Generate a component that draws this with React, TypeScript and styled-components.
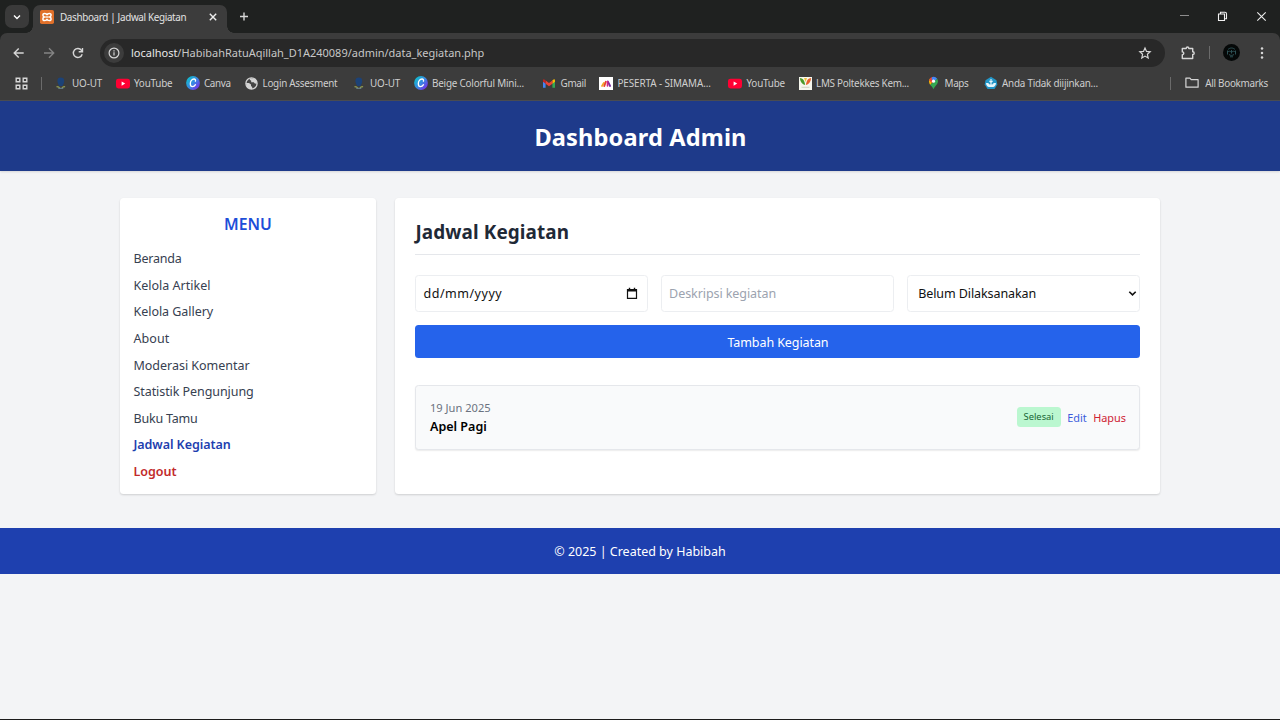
import React from "react";
import styled, { createGlobalStyle, css } from "styled-components";

const Global = createGlobalStyle`
  * { box-sizing: border-box; }
  html, body { margin: 0; padding: 0; background: #f3f4f6; }
  body { font-family: "Noto Sans", "Open Sans", sans-serif; overflow: hidden; }
  h1, h2, h3, p, ul { margin: 0; padding: 0; }
`;

const Screen = styled.div`
  width: 1280px;
  height: 720px;
  display: flex;
  flex-direction: column;
  background: #f3f4f6;
  border-bottom: 1px solid #1b1b1b;
`;

/* Browser frame */

const TabStrip = styled.div`
  height: 33px;
  flex: none;
  display: flex;
  align-items: flex-start;
  padding: 5px 0 0 5px;
  background: #1f2120;
  color: #e3e3e3;
`;

const TabSearch = styled.div`
  width: 24px;
  height: 23px;
  border-radius: 7px;
  background: #3a3a3a;
  display: flex;
  align-items: center;
  justify-content: center;
`;

const Tab = styled.div`
  position: relative;
  height: 28px;
  width: 194px;
  margin-left: 4px;
  padding: 0 9px 5px 7px;
  display: flex;
  align-items: center;
  border-radius: 7px 7px 0 0;
  background: #3c3c3c;

  &::before, &::after {
    content: "";
    position: absolute;
    bottom: 0;
    width: 7px;
    height: 7px;
  }
  &::before {
    left: -7px;
    background: radial-gradient(circle at 0 0, transparent 6.5px, #3c3c3c 7px);
  }
  &::after {
    right: -7px;
    background: radial-gradient(circle at 100% 0, transparent 6.5px, #3c3c3c 7px);
  }
`;

const TabTitle = styled.span`
  flex: 1;
  margin-left: 6px;
  font-size: 9.9px;
  letter-spacing: -0.34px;
  line-height: 14px;
  white-space: nowrap;
`;

const NewTab = styled.div`
  margin: 5px 0 0 11px;
  height: 14px;
  display: flex;
`;

const WindowControls = styled.div`
  margin: 3px 0 0 auto;
  padding-right: 13.5px;
  height: 16px;
  display: flex;
  align-items: center;
  gap: 27.5px;
`;

const ToolbarBack = styled.div`
  background: #1f2120;
  flex: none;
`;

const Toolbar = styled.div`
  height: 39px;
  display: flex;
  align-items: center;
  padding: 0 16px 0 12px;
  background: #3c3c3c;
  border-radius: 7px 7px 0 0;
`;

const NavButtons = styled.div`
  display: flex;
  gap: 15.7px;
  width: 88px;
`;

const AddressBar = styled.div`
  width: 1065px;
  height: 28px;
  border-radius: 14px;
  background: #282828;
  display: flex;
  align-items: center;
  padding: 0 13px 0 4px;
`;

const SiteInfo = styled.div`
  width: 20px;
  height: 20px;
  border-radius: 50%;
  background: #3c3c3c;
  display: flex;
  align-items: center;
  justify-content: center;
`;

const Url = styled.span`
  flex: 1;
  margin-left: 7px;
  font-size: 10.97px;
  line-height: 16px;
  color: #c7c7c7;
  white-space: nowrap;

  b { font-weight: 400; color: #e8e8e8; }
`;

const ToolbarEnd = styled.div`
  margin-left: auto;
  display: flex;
  align-items: center;
`;

const Divider = styled.span<{ $left?: number }>`
  flex: none;
  width: 1px;
  height: 13px;
  margin-left: ${(p) => p.$left ?? 0}px;
  background: #6b6b6b;
`;

const Avatar = styled.div`
  width: 17px;
  height: 17px;
  margin: 0 20px 0 13px;
  border-radius: 50%;
  background: #050808;
  display: flex;
  align-items: center;
  justify-content: center;
`;

const BookmarksBar = styled.div`
  height: 29px;
  flex: none;
  display: flex;
  align-items: center;
  padding: 0 12px 6px 15px;
  background: #3c3c3c;
  border-bottom: 1px solid #4a4c52;
`;

const BookmarkList = styled.div`
  display: flex;
  margin-left: 13px;
  flex: 1;
`;

const Bookmark = styled.div<{ $w: number }>`
  width: ${(p) => p.$w}px;
  display: flex;
  align-items: center;
  gap: 4.5px;
`;

const BookmarkLabel = styled.span<{ $ls: number }>`
  font-size: 9.9px;
  line-height: 14px;
  letter-spacing: ${(p) => p.$ls}px;
  color: #cfcfcf;
  white-space: nowrap;
`;

const AllBookmarks = styled.div`
  display: flex;
  align-items: center;
  gap: 6px;
  margin-left: 14px;
`;

/* Page */

const PageHeader = styled.header`
  height: 70px;
  flex: none;
  display: flex;
  align-items: center;
  justify-content: center;
  background: #1e3a8a;
  color: #fff;
  box-shadow: 0 1px 2px rgba(0, 0, 0, 0.12);

  h1 {
    padding: 2px 0 0 1px;
    font-size: 23.6px;
    line-height: 30px;
    letter-spacing: 0.14px;
    font-weight: 700;
  }
`;

const Main = styled.main`
  width: 1040px;
  height: 296.5px;
  flex: none;
  margin: 26.5px auto 33.5px;
  display: grid;
  grid-template-columns: 256px 765px;
  grid-template-rows: 296.5px;
  justify-content: space-between;
`;

const cardShadow = css`
  box-shadow: 0 1px 2px rgba(0, 0, 0, 0.12), 0 1px 3px rgba(0, 0, 0, 0.04);
`;

const Sidebar = styled.aside`
  padding: 13px 13.5px 0;
  border-radius: 3.5px;
  background: #fff;
  ${cardShadow}

  h3 {
    font-size: 15.8px;
    line-height: 26px;
    font-weight: 600;
    text-align: center;
    color: #1d4ed8;
  }
  ul {
    margin-top: 11.4px;
    list-style: none;
  }
`;

const MenuItem = styled.li<{ $tone?: "active" | "danger"; $ls: number }>`
  height: 26.67px;
  font-size: 12.53px;
  line-height: 21px;
  letter-spacing: ${(p) => p.$ls}px;
  font-weight: ${(p) => (p.$tone ? 600 : 400)};
  color: ${(p) => (p.$tone === "active" ? "#1e40af" : p.$tone === "danger" ? "#c22a2a" : "#374151")};
`;

const Content = styled.section`
  padding: 20px 20px 0;
  border-radius: 3.5px;
  background: #fff;
  ${cardShadow}

  h2 {
    height: 37.5px;
    padding: 1px 0 0 0.5px;
    border-bottom: 1px solid #e5e7eb;
    font-size: 18.9px;
    line-height: 27px;
    letter-spacing: 0.1px;
    font-weight: 700;
    color: #1f2937;
  }
`;

const Form = styled.div`
  display: grid;
  grid-template-columns: repeat(3, 1fr);
  gap: 13.3px;
  margin-top: 20px;
`;

const Field = styled.div<{ $pad: string; $ls: number; $muted?: boolean }>`
  height: 36.7px;
  padding: ${(p) => p.$pad};
  display: flex;
  align-items: center;
  justify-content: space-between;
  border: 1px solid #eceef1;
  border-radius: 3.5px;
  background: #fff;
  font-size: 12.53px;
  line-height: 20px;
  letter-spacing: ${(p) => p.$ls}px;
  color: ${(p) => (p.$muted ? "#9ca3af" : "#111")};
`;

const FieldIcon = styled.span`
  display: flex;
  padding-bottom: 2px;
`;

const SubmitButton = styled.button`
  grid-column: 1 / -1;
  height: 33.3px;
  padding: 1px 0 0 1px;
  border: 0;
  border-radius: 3.5px;
  background: #2563eb;
  color: #fff;
  font-family: inherit;
  font-size: 12.53px;
  letter-spacing: -0.09px;
`;

const Activity = styled.article`
  height: 64.5px;
  margin-top: 27px;
  padding: 0 13px 0 14px;
  display: flex;
  align-items: center;
  justify-content: space-between;
  border: 1px solid #e5e7eb;
  border-radius: 3.5px;
  background: #f9fafb;
  box-shadow: 0 1px 1.5px rgba(0, 0, 0, 0.08);
`;

const ActivityDate = styled.p`
  font-size: 11.1px;
  line-height: 17px;
  color: #6b7280;
`;

const ActivityName = styled.p`
  padding-top: 1px;
  font-size: 12.53px;
  line-height: 20px;
  font-weight: 600;
  color: #000;
`;

const Actions = styled.div`
  display: flex;
  align-items: center;
  gap: 6.5px;
`;

const Badge = styled.span`
  width: 44px;
  height: 20px;
  margin-bottom: 1px;
  border-radius: 3.5px;
  background: #bbf7d0;
  color: #166534;
  font-size: 9.35px;
  line-height: 20px;
  text-align: center;
`;

const ActionLink = styled.span<{ $color: string }>`
  padding-top: 1px;
  font-size: 10.9px;
  line-height: 16px;
  color: ${(p) => p.$color};
`;

const Footer = styled.footer`
  height: 46.5px;
  flex: none;
  display: flex;
  align-items: center;
  justify-content: center;
  padding-top: 1px;
  background: #1e40af;
  color: #fff;
  font-size: 12.5px;
  letter-spacing: -0.01px;
`;

/* Icons */

const stroke = { fill: "none", stroke: "#d6d6d6", strokeWidth: 1.4 } as const;

const Favicon = () => (
  <svg width="14" height="14" viewBox="0 0 14 14">
    <rect width="14" height="14" rx="1.8" fill="#e0702a" />
    <path
      d="M7 5.200C6.700 3.800 5.900 3.400 4.700 3.400 3.300 3.400 2.900 4.200 2.900 5.100c0 1 .6 1.500 1.300 1.900-.7.4-1.300.9-1.300 1.900 0 .9.4 1.700 1.800 1.700 1.200 0 2-.4 2.300-1.800.3 1.400 1.100 1.800 2.300 1.800 1.400 0 1.800-.8 1.800-1.700 0-1-.6-1.500-1.300-1.900.7-.4 1.300-.9 1.300-1.900 0-.9-.4-1.700-1.800-1.700-1.200 0-2 .4-2.300 1.800z"
      fill="none"
      stroke="#fff"
      strokeWidth="1.500"
    />
    <path d="M5.300 7h3.400" stroke="#fff" strokeWidth="1.300" />
  </svg>
);

const Crest = () => (
  <svg width="13" height="13" viewBox="0 0 13 13">
    <circle cx="5.800" cy="4" r="3.400" fill="#1c4277" />
    <path d="M2.800 6h6L7.500 9H4.100z" fill="#1c4277" />
    <path d="M1.500 9.600c1.300 0 2.300.4 3.200 1.100M10.100 9.600c-1.300 0-2.300.4-3.200 1.100" stroke="#8f9c52" strokeWidth="1.100" fill="none" />
    <path d="M3.300 11.300h5" stroke="#6d8a94" fill="none" />
  </svg>
);

const YouTube = () => (
  <svg width="14" height="13" viewBox="0 0 14 13">
    <rect y="1.700" width="14" height="9.800" rx="2.400" fill="#ff0033" />
    <path d="M5.600 4.500v4.200l3.600-2.100z" fill="#fff" />
  </svg>
);

const Canva = ({ id }: { id: string }) => (
  <svg width="14" height="14" viewBox="0 0 14 14">
    <defs>
      <linearGradient id={id} x1="0.100" y1="0.200" x2="0.900" y2="0.900">
        <stop offset="0" stopColor="#13b9cf" />
        <stop offset="0.500" stopColor="#3a86e4" />
        <stop offset="1" stopColor="#7a2be8" />
      </linearGradient>
    </defs>
    <circle cx="7" cy="7" r="6.900" fill={`url(#${id})`} />
    <path d="M9.400 5.200c.4-1.200-.2-2.200-1.400-2.200C5.900 3 4.300 5.300 4.300 7.800c0 1.800.8 2.900 2.200 2.900 1.300 0 2.300-.8 3-2" fill="none" stroke="#fff" strokeWidth="1.300" strokeLinecap="round" />
  </svg>
);

const Globe = () => (
  <svg width="13" height="13" viewBox="0 0 13 13">
    <circle cx="6.500" cy="6.500" r="5.600" fill="#444" stroke="#d4d4d4" strokeWidth="1.300" />
    <path d="M1 6h3l2 1.600v1.300l1.200 1v2L5 12 2 10zM5 1.200l-.3 1.600 1.500 1v1.400h2.600l1 1.400 2 .2V4L9 1.500z" fill="#d4d4d4" />
  </svg>
);

const Gmail = () => (
  <svg width="14" height="13" viewBox="0 0 14 13">
    <path d="M1 3.500v7.300h2.600V5.500z" fill="#4285f4" />
    <path d="M13 3.500v7.300h-2.600V5.500z" fill="#34a853" />
    <path d="M10.400 3.300L12 2.200c.5 0 1 .5 1 1.200v1.400l-2.600 2z" fill="#fbbc04" />
    <path d="M3.600 3.500L7 6.100l3.400-2.600v3.200L7 9.200 3.600 6.700z" fill="#ea4335" />
    <path d="M1 3.400c0-.7.500-1.200 1-1.200l1.600 1.300v3.200L1 4.800z" fill="#c5221f" />
  </svg>
);

const Simama = () => (
  <svg width="14" height="13" viewBox="0 0 14 13">
    <rect width="14" height="13" fill="#fff" />
    <path d="M3 9L4.800 5.800" stroke="#f5a623" strokeWidth="1.700" strokeLinecap="round" />
    <path d="M5.300 9l1.500-4.200" stroke="#e8432e" strokeWidth="1.900" strokeLinecap="round" />
    <path d="M8.800 4.500l2.300 4.500" stroke="#7b2fa0" strokeWidth="1.900" strokeLinecap="round" />
    <path d="M8.500 4.500V9" stroke="#d2258b" strokeWidth="1.600" strokeLinecap="round" />
  </svg>
);

const Lms = () => (
  <svg width="13" height="13" viewBox="0 0 13 13">
    <rect width="13" height="13" fill="#f6f7ee" />
    <path d="M.8 1c3 .3 4.700 2.300 5.300 6.900C3.200 7.500 1.300 5 .8 1z" fill="#4c9a2a" />
    <path d="M12.200 1c-3 .3-4.700 2.300-5.300 6.900C9.800 7.500 11.700 5 12.200 1z" fill="#e8622c" />
    <path d="M5 1h3L6.500 5z" fill="#f0c23b" />
    <path d="M2.500 10.300h8" stroke="#c3cbb8" strokeWidth=".8" />
  </svg>
);

const Maps = () => (
  <svg width="13" height="14" viewBox="0 0 13 14">
    <path d="M2 5.300A4.500 4.500 0 0 1 3 2.400L6.500 5.300 3.200 9C2.500 7.800 2 6.600 2 5.300z" fill="#fbbc04" />
    <path d="M3 2.400A4.500 4.500 0 0 1 5.200 1L8 3.400 4.800 7 2.100 4.200z" fill="#ea4335" />
    <path d="M5.200 1A4.600 4.600 0 0 1 10.200 2.700L7.500 6 4.500 3z" fill="#4285f4" />
    <path d="M10.200 2.700c.5.800.8 1.700.8 2.600 0 3-3 4.500-4.500 8-.6-1.600-1.700-2.800-3.300-4.300z" fill="#34a853" />
    <circle cx="6.500" cy="5.200" r="1.600" fill="#fff" />
  </svg>
);

const Kemdik = () => (
  <svg width="14" height="14" viewBox="0 0 14 14">
    <path d="M7 .7l5.500 3.600.8 4.200L10.500 13h-7L.7 8.500l.8-4.200z" fill="#2296c8" />
    <path d="M2 7.200c1.600-.3 2.800.2 3.600 1.300h2.800c.8-1.100 2-1.600 3.600-1.300-.2 2.100-1.400 3.600-3 3.900H5C3.400 10.800 2.200 9.300 2 7.200z" fill="#e6f6fc" />
    <path d="M7 3v6M5.400 4.800L7 6.400l1.600-1.600" fill="none" stroke="#e6f6fc" strokeWidth="1.100" />
  </svg>
);

const bookmarks: { label: string; w: number; ls: number; icon: React.ReactNode }[] = [
  { label: "UO-UT", w: 61, ls: -0.15, icon: <Crest /> },
  { label: "YouTube", w: 70, ls: -0.22, icon: <YouTube /> },
  { label: "Canva", w: 59.5, ls: -0.38, icon: <Canva id="canvaA" /> },
  { label: "Login Assesment", w: 107.5, ls: -0.28, icon: <Globe /> },
  { label: "UO-UT", w: 61, ls: -0.15, icon: <Crest /> },
  { label: "Beige Colorful Mini...", w: 128.5, ls: -0.2, icon: <Canva id="canvaB" /> },
  { label: "Gmail", w: 57, ls: -0.3, icon: <Gmail /> },
  { label: "PESERTA - SIMAMA...", w: 129, ls: -0.1, icon: <Simama /> },
  { label: "YouTube", w: 70.5, ls: -0.22, icon: <YouTube /> },
  { label: "LMS Poltekkes Kem...", w: 128.500, ls: -0.26, icon: <Lms /> },
  { label: "Maps", w: 56.5, ls: -0.33, icon: <Maps /> },
  { label: "Anda Tidak diijinkan...", w: 120, ls: -0.24, icon: <Kemdik /> },
];

const menu: { label: string; ls: number; tone?: "active" | "danger" }[] = [
  { label: "Beranda", ls: -0.2 },
  { label: "Kelola Artikel", ls: 0 },
  { label: "Kelola Gallery", ls: -0.05 },
  { label: "About", ls: 0.08 },
  { label: "Moderasi Komentar", ls: -0.03 },
  { label: "Statistik Pengunjung", ls: -0.08 },
  { label: "Buku Tamu", ls: -0.2 },
  { label: "Jadwal Kegiatan", ls: -0.06, tone: "active" },
  { label: "Logout", ls: -0.02, tone: "danger" },
];

export default function App() {
  return (
    <Screen>
      <Global />
      <TabStrip>
        <TabSearch>
          <svg width="10" height="10" viewBox="0 0 10 10"><path d="M2 3.500l3 3 3-3" {...stroke} stroke="#fff" /></svg>
        </TabSearch>
        <Tab>
          <Favicon />
          <TabTitle>Dashboard | Jadwal Kegiatan</TabTitle>
          <svg width="10" height="10" viewBox="0 0 10 10"><path d="M1.800 1.800l6.400 6.400M8.200 1.800L1.800 8.200" {...stroke} stroke="#eee" /></svg>
        </Tab>
        <NewTab>
          <svg width="12" height="14" viewBox="0 0 12 14"><path d="M6 2.500v8M2 6.500h8" {...stroke} /></svg>
        </NewTab>
        <WindowControls>
          <svg width="11" height="14" viewBox="0 0 11 14"><path d="M1 6.500h9" stroke="#8d8d8d" /></svg>
          <svg width="11" height="11" viewBox="0 0 11 11"><path d="M1.500 3h6v6.500h-6zM3.500 2.500V1.200H8A1.500 1.500 0 0 1 9.500 2.700v5H8" {...stroke} stroke="#f2f2f2" strokeWidth={1.1} /></svg>
          <svg width="11" height="11" viewBox="0 0 11 11"><path d="M1.300 1.300l8.400 8.400M9.700 1.300L1.300 9.700" {...stroke} stroke="#eee" strokeWidth={1.1} /></svg>
        </WindowControls>
      </TabStrip>
      <ToolbarBack>
        <Toolbar>
          <NavButtons>
            <svg width="14" height="14" viewBox="0 0 14 14"><path d="M11.700 7H2.500M6.700 2.500L2.200 7l4.500 4.500" {...stroke} /></svg>
            <svg width="14" height="14" viewBox="0 0 14 14"><path d="M2 7h9.500M7 2.300L11.700 7 7 11.700" {...stroke} stroke="#848484" /></svg>
            <svg width="14" height="14" viewBox="0 0 14 14"><path d="M11.200 8.300A4.500 4.500 0 1 1 10.500 4.300L11.500 5.500M11.500 1.900v3.800H7.700" {...stroke} /></svg>
          </NavButtons>
          <AddressBar>
            <SiteInfo>
              <svg width="12" height="12" viewBox="0 0 12 12">
                <circle cx="6" cy="6" r="4.900" {...stroke} strokeWidth={1.2} />
                <path d="M6 5.300v3.300M6 3.200v1.200" {...stroke} strokeWidth={1.2} />
              </svg>
            </SiteInfo>
            <Url><b>localhost</b>/HabibahRatuAqillah_D1A240089/admin/data_kegiatan.php</Url>
            <svg width="14" height="14" viewBox="0 0 14 14"><path d="M7 2l1.500 3.400 3.700.4-2.800 2.500.8 3.700L7 10.100 3.800 12l.8-3.700-2.800-2.500 3.700-.4z" {...stroke} strokeWidth={1.200} /></svg>
          </AddressBar>
          <ToolbarEnd>
            <svg width="16" height="16" viewBox="0 0 16 16"><path d="M2.300 3.500H6.200c0-2 2.600-2 2.600 0H12.700v3.300c2 0 2 2.700 0 2.700v4H2.300v-3.800c2-.1 2-2.700 0-2.800z" {...stroke} strokeLinejoin="round" /></svg>
            <Divider $left={13} />
            <Avatar>
              <svg width="13" height="13" viewBox="0 0 13 13">
                <path d="M3 3.500c2-2 5-2 7 0M2.500 6c1.500-1 2.500-1 3.500 0M7 6c1-1 2-1 3.500 0M4 8.500c1.500 1.200 3.500 1.200 5 0M5 10.800h3M2.500 4.500v4M10.500 4.500v4M6.500 4v3.500" fill="none" stroke="#31585c" strokeWidth=".9" />
              </svg>
            </Avatar>
            <svg width="4" height="14" viewBox="0 0 4 14" fill="#d6d6d6"><circle cx="2" cy="2.500" r="1.250" /><circle cx="2" cy="7" r="1.250" /><circle cx="2" cy="11.500" r="1.250" /></svg>
          </ToolbarEnd>
        </Toolbar>
      </ToolbarBack>
      <BookmarksBar>
        <svg width="13" height="13" viewBox="0 0 13 13"><path d="M1.200 1.200h3.600v3.600H1.200zM8.200 1.200h3.600v3.600H8.200zM1.200 8.200h3.600v3.600H1.200zM8.200 8.200h3.600v3.600H8.200z" {...stroke} /></svg>
        <Divider $left={12.5} />
        <BookmarkList>
          {bookmarks.map((b, i) => (
            <Bookmark key={i} $w={b.w}>
              {b.icon}
              <BookmarkLabel $ls={b.ls}>{b.label}</BookmarkLabel>
            </Bookmark>
          ))}
        </BookmarkList>
        <Divider />
        <AllBookmarks>
          <svg width="14" height="12" viewBox="0 0 14 12"><path d="M.9 1.200h4l1.300 1.500h6.900v7.500H.9z" {...stroke} strokeWidth={1.200} strokeLinejoin="round" /></svg>
          <BookmarkLabel $ls={-0.29}>All Bookmarks</BookmarkLabel>
        </AllBookmarks>
      </BookmarksBar>

      <PageHeader><h1>Dashboard Admin</h1></PageHeader>
      <Main>
        <Sidebar>
          <h3>MENU</h3>
          <ul>
            {menu.map((m) => (
              <MenuItem key={m.label} $ls={m.ls} $tone={m.tone}>{m.label}</MenuItem>
            ))}
          </ul>
        </Sidebar>
        <Content>
          <h2>Jadwal Kegiatan</h2>
          <Form>
            <Field $pad="2px 9px 0 7.500px" $ls={0.5}>
              dd/mm/yyyy
              <FieldIcon>
                <svg width="12" height="13" viewBox="0 0 12 13"><path d="M1.500 2.500h9v8.800h-9z" fill="none" stroke="#111" strokeWidth="1.200" /><path d="M1 2h10v2.500H1zM2.800.7h1.400V3H2.800zM7.800.7h1.400V3H7.800z" fill="#111" /></svg>
              </FieldIcon>
            </Field>
            <Field $pad="2px 7px 0" $ls={-0.08} $muted>Deskripsi kegiatan</Field>
            <Field $pad="2px 2px 0 10px" $ls={-0.09}>
              Belum Dilaksanakan
              <FieldIcon>
                <svg width="9" height="9" viewBox="0 0 9 9"><path d="M1.300 2.700l3.200 3.200 3.200-3.200" fill="none" stroke="#111" strokeWidth="1.600" /></svg>
              </FieldIcon>
            </Field>
            <SubmitButton>Tambah Kegiatan</SubmitButton>
          </Form>
          <Activity>
            <div>
              <ActivityDate>19 Jun 2025</ActivityDate>
              <ActivityName>Apel Pagi</ActivityName>
            </div>
            <Actions>
              <Badge>Selesai</Badge>
              <ActionLink $color="#3b5bdb">Edit</ActionLink>
              <ActionLink $color="#cf2233">Hapus</ActionLink>
            </Actions>
          </Activity>
        </Content>
      </Main>
      <Footer>© 2025 | Created by Habibah</Footer>
    </Screen>
  );
}
